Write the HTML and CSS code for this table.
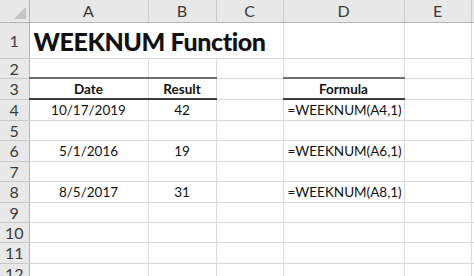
FILE: index.html
```html
<!DOCTYPE html>
<html lang="en">
<head>
  <meta charset="UTF-8" />
  <meta name="viewport" content="width=device-width, initial-scale=1.0" />
  <title>WEEKNUM Function</title>
  <link rel="stylesheet" href="styles.css">
</head>
<body>

  <table class="sheet">
    <colgroup>
      <col class="c-hdr">
      <col class="c-a">
      <col class="c-b">
      <col class="c-c">
      <col class="c-d">
      <col class="c-e">
      <col class="c-f">
    </colgroup>

    <!-- Column letters -->
    <tr class="r-head">
      <th class="corner"><span class="tri"></span></th>
      <th>A</th>
      <th>B</th>
      <th>C</th>
      <th>D</th>
      <th>E</th>
      <th class="last"></th>
    </tr>

    <tr class="r-title">
      <th>1</th>
      <td class="title" colspan="3">WEEKNUM Function</td>
      <td></td>
      <td></td>
      <td></td>
    </tr>
    <tr class="r2">
      <th>2</th><td></td><td></td><td></td><td></td><td></td><td></td>
    </tr>
    <tr class="r3">
      <th>3</th>
      <td class="hd">Date</td>
      <td class="hd">Result</td>
      <td></td>
      <td class="hd">Formula</td>
      <td></td><td></td>
    </tr>
    <tr class="r4">
      <th>4</th>
      <td class="mid">10/17/2019</td>
      <td class="mid">42</td>
      <td></td>
      <td class="fx">=WEEKNUM(A4,1)</td>
      <td></td><td></td>
    </tr>
    <tr class="r5">
      <th>5</th><td></td><td></td><td></td><td></td><td></td><td></td>
    </tr>
    <tr class="r6">
      <th>6</th>
      <td class="mid">5/1/2016</td>
      <td class="mid">19</td>
      <td></td>
      <td class="fx">=WEEKNUM(A6,1)</td>
      <td></td><td></td>
    </tr>
    <tr class="r7">
      <th>7</th><td></td><td></td><td></td><td></td><td></td><td></td>
    </tr>
    <tr class="r8">
      <th>8</th>
      <td class="mid">8/5/2017</td>
      <td class="mid">31</td>
      <td></td>
      <td class="fx">=WEEKNUM(A8,1)</td>
      <td></td><td></td>
    </tr>
    <tr class="r9">
      <th>9</th><td></td><td></td><td></td><td></td><td></td><td></td>
    </tr>
    <tr class="r10">
      <th>10</th><td></td><td></td><td></td><td></td><td></td><td></td>
    </tr>
    <tr class="r11">
      <th>11</th><td></td><td></td><td></td><td></td><td></td><td></td>
    </tr>
    <tr class="r12">
      <th>12</th><td></td><td></td><td></td><td></td><td></td><td></td>
    </tr>
  </table>

</body>
</html>
```

FILE: styles.css
```css
:root {
  --grid: #d9d9d9;
  --head-bg: #e8e8e8;
  --head-line: #c8c8c8;
  --head-text: #3a3a3a;
  --ink: #111111;
}

* {
  margin: 0;
  padding: 0;
  box-sizing: border-box;
}

html,
body {
  width: 100%;
  height: 100%;
  overflow: hidden;
  background: #ffffff;
  font-family: Lato, "Open Sans", sans-serif;
}

.sheet {
  border-collapse: collapse;
  table-layout: fixed;
  width: 480px;
}

.c-hdr { width: 29px; }
.c-a { width: 119px; }
.c-b { width: 68px; }
.c-c { width: 67px; }
.c-d { width: 121px; }
.c-e { width: 67px; }
.c-f { width: 9px; }

.sheet th,
.sheet td {
  border: 1px solid var(--grid);
  padding: 0 4px;
  white-space: nowrap;
  overflow: hidden;
  font-size: 13.5px;
  font-weight: 400;
  color: var(--ink);
  vertical-align: middle;
}

/* row and column headers */
.sheet th {
  background: var(--head-bg);
  color: var(--head-text);
  text-align: center;
  border-color: var(--head-line);
  padding: 0;
}

.r-head th {
  font-size: 16px;
  border-top: none;
  border-bottom: 1px solid #b4b4b4;
}

.sheet tr > th:first-child {
  border-left: none;
  border-right: 1px solid #b4b4b4;
  font-size: 16px;
}

.corner {
  position: relative;
}

.tri {
  position: absolute;
  right: 3px;
  bottom: 3px;
  width: 0;
  height: 0;
  border-left: 12px solid transparent;
  border-bottom: 12px solid #c4c4c4;
}

/* row heights */
.r-head { height: 22px; }
.r-title { height: 36px; }
.r2 { height: 20px; }
.r3 { height: 21px; }
.r4 { height: 21px; }
.r5 { height: 20px; }
.r6 { height: 21px; }
.r7 { height: 20px; }
.r8 { height: 21px; }
.r9 { height: 20px; }
.r10 { height: 20px; }
.r11 { height: 21px; }
.r12 { height: 20px; }

.sheet td.title {
  font-size: 25px;
  font-weight: 900;
  letter-spacing: -0.4px;
  vertical-align: bottom;
  padding: 0 0 2px 4px;
  overflow: visible;
}

.sheet td.hd {
  font-weight: 700;
  text-align: center;
  border-top: 2px solid #6e6e6e;
  border-bottom: 2px solid #3c3c3c;
}

.sheet td.fx {
  overflow: visible;
  padding-left: 4px;
}

.mid {
  text-align: center;
}
```
